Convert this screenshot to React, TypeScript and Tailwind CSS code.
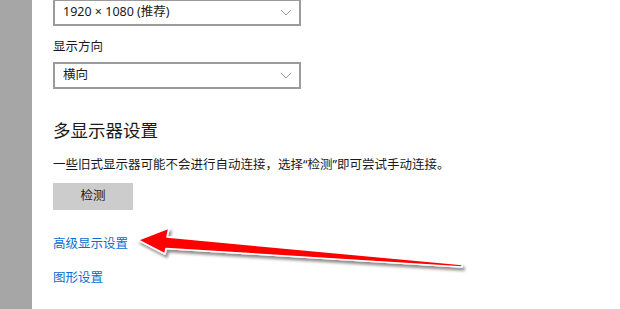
const font = { fontFamily: '"Noto Sans", "Noto Sans CJK SC", sans-serif' };

function Chevron() {
  return (
    <svg width="12" height="7" viewBox="0 0 12 7" className="shrink-0">
      <path d="M1 1l5 5 5-5" fill="none" stroke="#9a9a9a" strokeWidth="1" />
    </svg>
  );
}

function Select({ value, className = '' }: { value: string; className?: string }) {
  return (
    <div
      className={`flex h-[27px] w-[248px] items-center justify-between border-2 border-[#9b9b9b] bg-white pl-[8px] pr-[7px] text-[12.5px] text-[#1a1a1a] ${className}`}
    >
      <span>{value}</span>
      <Chevron />
    </div>
  );
}

function Arrow() {
  return (
    <svg className="pointer-events-none absolute inset-0" width="620" height="309" viewBox="0 0 620 309">
      <defs>
        <filter id="sh" x="-10%" y="-50%" width="120%" height="200%">
          <feDropShadow dx="2" dy="3" stdDeviation="1.6" floodColor="#000" floodOpacity="0.45" />
        </filter>
      </defs>
      <polygon
        points="138,240 169,228 167,237 462,264.5 462,267 166,248.5 165,254"
        fill="#ff0000"
        stroke="#ffffff"
        strokeWidth="1.6"
        strokeLinejoin="round"
        filter="url(#sh)"
      />
    </svg>
  );
}

export default function App() {
  return (
    <div className="relative flex h-[309px] w-[620px] overflow-hidden bg-white" style={font}>
      <div className="w-[32px] shrink-0 bg-[#a6a6a6]" />
      <div className="flex flex-col items-start pl-[21px]">
        <Select value="1920 × 1080 (推荐)" className="mt-[-1px]" />
        <p className="mt-[12px] text-[12.5px] leading-[18px] text-[#1a1a1a]">显示方向</p>
        <Select value="横向" className="mt-[6px]" />
        <h2 className="mt-[29px] text-[17.5px] leading-[24px] text-[#1a1a1a]">多显示器设置</h2>
        <p className="mt-[14px] text-[12.5px] leading-[18px] text-[#1a1a1a]">
          一些旧式显示器可能不会进行自动连接，选择“检测”即可尝试手动连接。
        </p>
        <button className="mt-[9px] flex h-[27px] w-[80px] items-center justify-center bg-[#cccccc] text-[12.5px] text-[#1a1a1a]">
          检测
        </button>
        <a className="mt-[25px] text-[12.5px] leading-[18px] text-[#0b6dd0]">高级显示设置</a>
        <a className="mt-[16px] text-[12.5px] leading-[18px] text-[#0b6dd0]">图形设置</a>
      </div>
      <Arrow />
    </div>
  );
}
